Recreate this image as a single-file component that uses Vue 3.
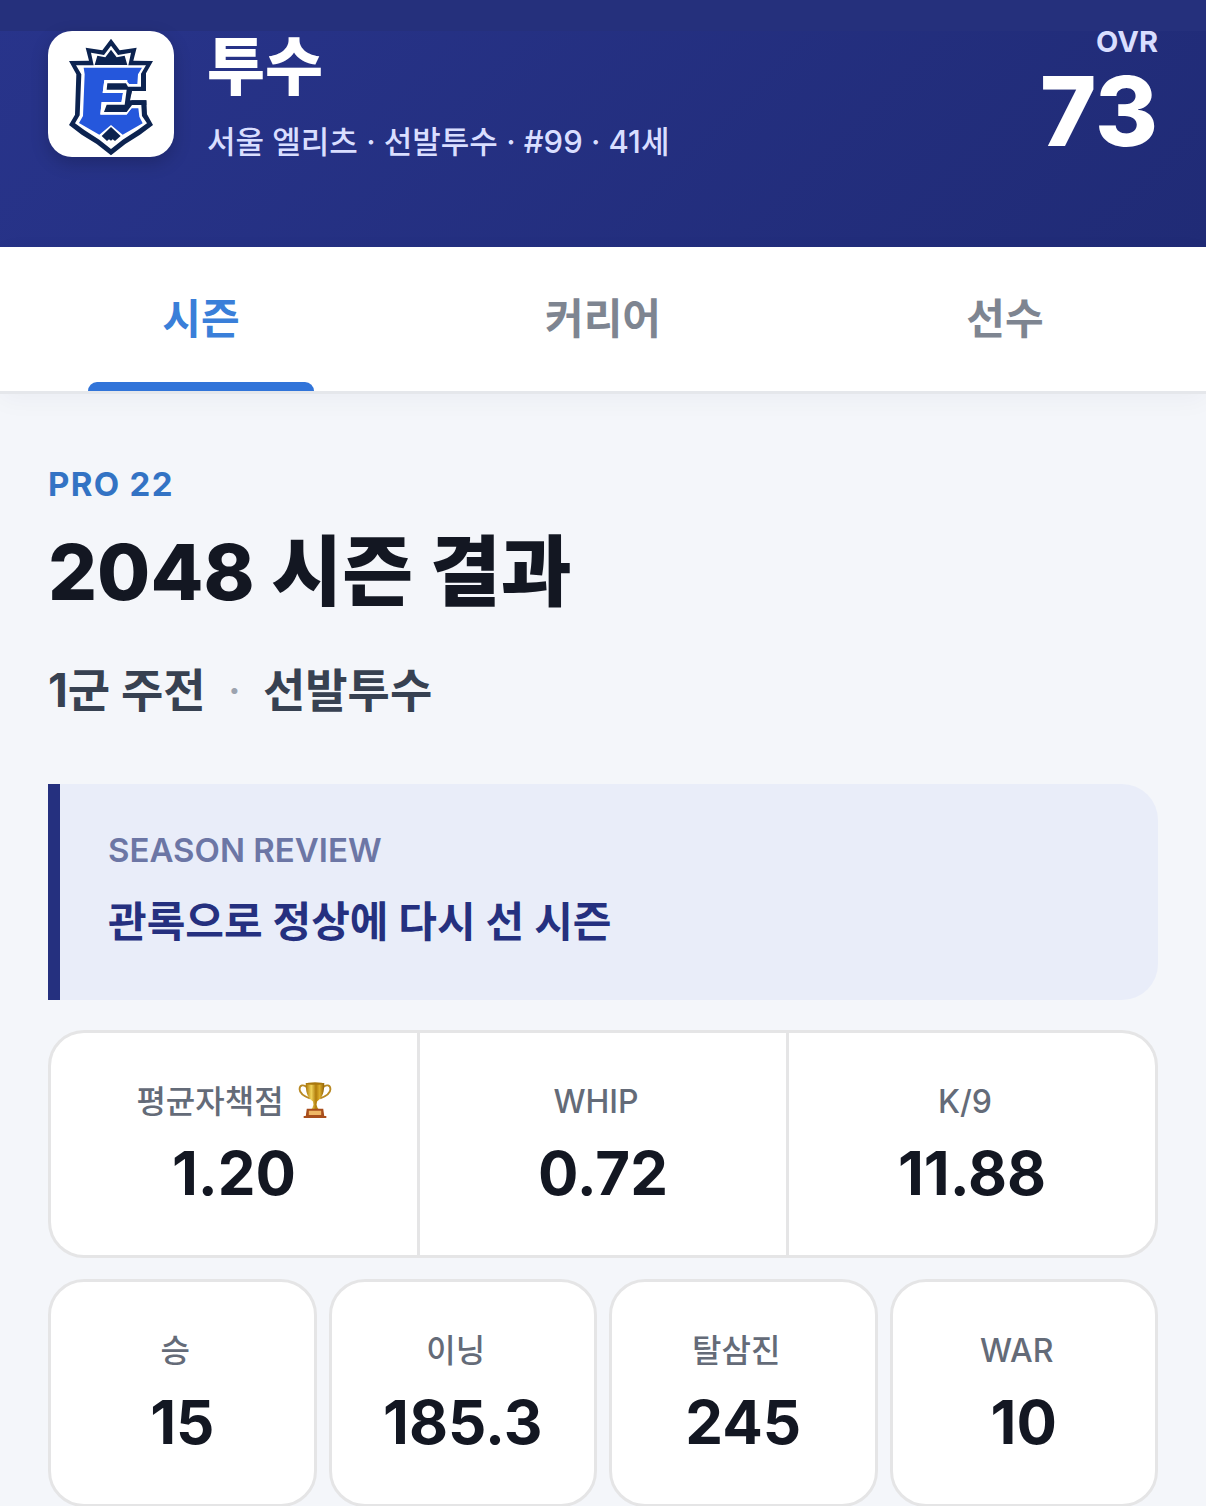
<script setup>
import { ref } from "vue";

const player = {
  name: "투수",
  info: "서울 엘리츠 · 선발투수 · #99 · 41세",
  ovr: 73,
};

const tabs = ["시즌", "커리어", "선수"];
const activeTab = ref("시즌");

const rateStats = [
  { label: "평균자책점", value: "1.20", award: true },
  { label: "WHIP", value: "0.72" },
  { label: "K/9", value: "11.88" },
];

const countStats = [
  { label: "승", value: "15" },
  { label: "이닝", value: "185.3" },
  { label: "탈삼진", value: "245" },
  { label: "WAR", value: "10" },
];
</script>

<template>
  <div class="page">
    <header class="header">
      <div class="safe-area"></div>
      <div class="profile">
        <div class="logo">
          <svg viewBox="24 33 378 378" aria-hidden="true">
            <!-- shield and crown -->
            <path fill="#0c2350" d="M213 56 L239 91 L290 83 L280 122 L339 123 L318 160 L318 213 L275 213 L270 241 L319 241 L321 283 L339 315 L300 344 L256 372 L213 406 L170 372 L125 344 L87 315 L105 284 L109 163 L87 123 L147 122 L137 83 L187 91 Z" />
            <path fill="#fff" d="M213 77 L234 105 L273 98 L265 136 L318 136 L303 161 L303 201 L259 201 L259 255 L304 255 L306 288 L321 310 L292 331 L248 359 L213 387 L178 359 L134 331 L105 310 L119 286 L124 163 L108 136 L161 136 L153 98 L192 105 Z" />
            <path fill="#0c2350" d="M164 135 L172 107 L196 112 L213 89 L230 112 L254 107 L262 135 Z" />
            <!-- crest -->
            <path fill="#2557dc" d="M131 143 L306 143 L294 163 L292 192 L268 192 L257 181 L193 181 L188 219 L249 219 L245 246 L185 246 L181 283 L260 283 L275 265 L295 265 L298 290 L308 310 L248 344 L213 315 L178 344 L117 309 L129 288 L134 163 Z" />
            <path fill="#fff" d="M193 180 H262 L262 201 H272 V241 H275 V263 L260 284 H181 L185 246 H244 L249 218 H188 Z" />
            <path fill="#0c2350" d="M202 190 H258 L264 200 H318 V213 H276 L270 241 H319 V255 H276 L260 276 H192 L200 254 H254 L260 209 H200 Z" />
            <path fill="#0c2350" d="M213 321 L242 348 L225 363 L218 358 L213 362 L207 358 L201 363 L185 348 Z" />
          </svg>
        </div>
        <div class="who">
          <h1 class="name">{{ player.name }}</h1>
          <p class="info">{{ player.info }}</p>
        </div>
        <div class="ovr">
          <span class="ovr-label">OVR</span>
          <strong class="ovr-value">{{ player.ovr }}</strong>
        </div>
      </div>
    </header>

    <nav class="tabs">
      <button
        v-for="tab in tabs"
        :key="tab"
        type="button"
        class="tab"
        :class="{ active: tab === activeTab }"
        @click="activeTab = tab"
      >
        {{ tab }}
      </button>
    </nav>

    <main class="content">
      <p class="eyebrow">PRO 22</p>
      <h2 class="title">2048 시즌 결과</h2>
      <p class="role">
        <span>1군 주전</span>
        <span class="dot">·</span>
        <span>선발투수</span>
      </p>

      <section class="review">
        <p class="review-label">SEASON REVIEW</p>
        <p class="review-text">관록으로 정상에 다시 선 시즌</p>
      </section>

      <section class="rates">
        <div v-for="stat in rateStats" :key="stat.label" class="stat">
          <div class="stat-label">
            <span>{{ stat.label }}</span>
            <span class="award">
              <svg v-if="stat.award" class="trophy" viewBox="0 0 32 35" role="img" aria-label="1위">
                <defs>
                  <linearGradient id="gold">
                    <stop offset="0" stop-color="#a87408" />
                    <stop offset="0.3" stop-color="#f0d35a" />
                    <stop offset="0.55" stop-color="#b07c0c" />
                    <stop offset="0.75" stop-color="#dcae2c" />
                    <stop offset="1" stop-color="#8f5f06" />
                  </linearGradient>
                </defs>
                <path fill="none" stroke="#b98a24" stroke-width="1.8" d="M8 5 C5 2 1 3 1 7 C1 11 6 14 11 16 M24 5 C27 2 31 3 31 7 C31 11 26 14 21 16" />
                <path fill="url(#gold)" d="M7 1 H25 C25 9 24 15 18 19 L17.500 22 L18.500 25 L20 27 H12 L13.500 25 L14.500 22 L14 19 C8 15 7 9 7 1 Z" />
                <ellipse cx="16" cy="1.500" rx="9" ry="1.200" fill="#a9780f" />
                <path fill="#a84e1c" d="M8 26 H24 L25 33 H27 V35 H5 V33 H7 Z" />
                <path fill="#efb765" d="M10 28 H22 V32 H10 Z" />
              </svg>
            </span>
          </div>
          <div class="stat-value">{{ stat.value }}</div>
        </div>
      </section>

      <section class="counts">
        <div v-for="stat in countStats" :key="stat.label" class="stat card">
          <div class="stat-label">
            <span>{{ stat.label }}</span>
            <span class="award"></span>
          </div>
          <div class="stat-value">{{ stat.value }}</div>
        </div>
      </section>
    </main>
  </div>
</template>

<style>
body {
  background: #f4f6fa;
}
</style>

<style scoped>
.page {
  font-family: Inter, "Noto Sans CJK KR", sans-serif;
  color: #131722;
  background: #f4f6fa;
}

h1, h2, p {
  margin: 0;
}

.header {
  background: linear-gradient(135deg, #28348b 0%, #202b76 100%);
}

.safe-area {
  height: 31px;
  background: #25307c;
}

.profile {
  display: flex;
  align-items: flex-start;
  gap: 33px;
  height: 216px;
  padding: 0 48px;
  box-sizing: border-box;
}

.logo {
  width: 126px;
  height: 126px;
  flex-shrink: 0;
  border-radius: 24px;
  background: #fff;
  box-shadow: 0 6px 18px rgba(0, 0, 0, 0.2);
}

.logo svg {
  display: block;
}

.who {
  flex: 1;
}

.name {
  font-size: 63px;
  line-height: 70px;
  font-weight: 800;
  color: #fff;
}

.info {
  margin-top: 21px;
  font-size: 31px;
  line-height: 40px;
  font-weight: 500;
  color: #d9deff;
}

.ovr {
  display: flex;
  flex-direction: column;
  align-items: flex-end;
}

.ovr-label {
  font-size: 29px;
  line-height: 22px;
  font-weight: 700;
  color: #d9deff;
}

.ovr-value {
  font-size: 96px;
  line-height: 116px;
  font-weight: 800;
  color: #fff;
}

.tabs {
  display: grid;
  grid-template-columns: repeat(3, 1fr);
  background: #fff;
  border-bottom: 3px solid #e5e7eb;
  box-shadow: 0 6px 24px rgba(20, 30, 70, 0.04);
}

.tab {
  position: relative;
  height: 144px;
  padding: 0 0 8px;
  border: 0;
  background: none;
  font: inherit;
  font-size: 42px;
  font-weight: 600;
  color: #7e8591;
}

.tab.active {
  color: #3a7fd9;
}

.tab.active::after {
  content: "";
  position: absolute;
  right: 22%;
  bottom: 0;
  left: 22%;
  height: 9px;
  border-radius: 9px 9px 0 0;
  background: #3174d9;
}

.content {
  padding: 70px 48px 0;
}

.eyebrow {
  font-size: 33px;
  line-height: 40px;
  font-weight: 700;
  letter-spacing: 0.04em;
  color: #3373c4;
}

.title {
  margin-top: 18px;
  font-size: 77px;
  line-height: 100px;
  font-weight: 800;
}

.role {
  display: flex;
  gap: 22px;
  margin-top: 36px;
  font-size: 46px;
  line-height: 64px;
  font-weight: 700;
  color: #374151;
}

.dot {
  font-weight: 400;
  color: #9ca3af;
}

.review {
  margin-top: 62px;
  padding: 46px 48px;
  border-left: 12px solid #25307f;
  border-radius: 0 36px 36px 0;
  background: #e9edf9;
}

.review-label {
  font-size: 33px;
  line-height: 40px;
  font-weight: 600;
  color: #6c76a5;
}

.review-text {
  margin-top: 20px;
  font-size: 42px;
  line-height: 64px;
  font-weight: 700;
  color: #25307f;
}

/* the 3px gaps show the background as dividers */
.rates {
  display: grid;
  grid-template-columns: repeat(3, 1fr);
  gap: 3px;
  margin-top: 30px;
  border: 3px solid #e5e5e6;
  border-radius: 36px;
  background: #e5e5e6;
  overflow: hidden;
}

.counts {
  display: grid;
  grid-template-columns: repeat(4, 1fr);
  gap: 12px;
  margin-top: 21px;
}

.stat {
  padding: 49px 0 46px;
  background: #fff;
  text-align: center;
}

.card {
  border: 3px solid #e5e5e6;
  border-radius: 36px;
}

.stat-label {
  display: flex;
  justify-content: center;
  align-items: flex-start;
  gap: 14px;
  font-size: 32px;
  line-height: 40px;
  font-weight: 500;
  color: #646b78;
}

.trophy {
  display: block;
  width: 34px;
  height: 36px;
}

.stat-value {
  margin-top: 15px;
  font-size: 60px;
  line-height: 72px;
  font-weight: 700;
}
</style>
